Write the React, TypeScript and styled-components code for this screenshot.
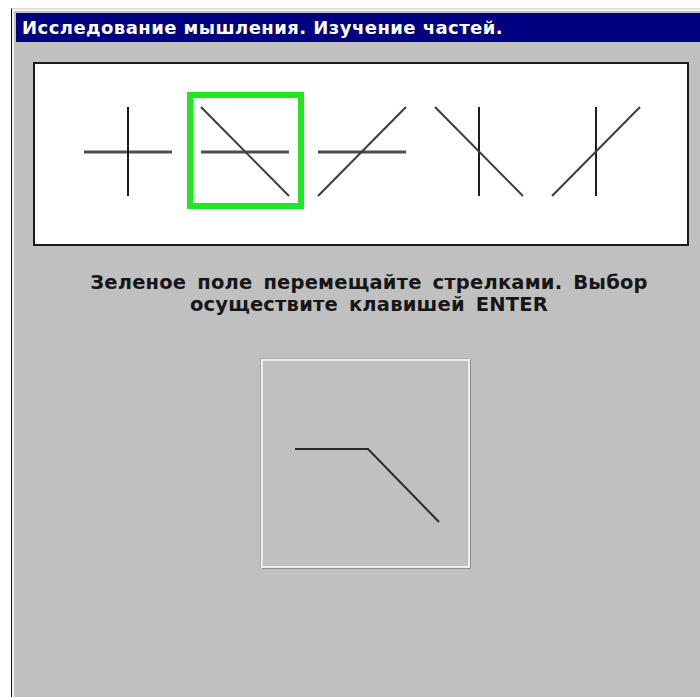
import styled, { createGlobalStyle } from 'styled-components';

const GlobalStyle = createGlobalStyle`
	html, body {
		margin: 0;
		padding: 0;
		background: #ffffff;
		overflow: hidden;
	}
	body {
		font-family: "DejaVu Sans", "Liberation Sans", sans-serif;
	}
`;

type Kind = 'h' | 'v' | 'down' | 'up';

// each variant combines two of the strokes
const variants: Kind[][] = [
	['h', 'v'],
	['h', 'down'],
	['h', 'up'],
	['v', 'down'],
	['v', 'up'],
];

const L = 14;
const R = 102;
const T = 15;
const B = 104;
const MX = 58;
const MY = 60;

function Stroke({ kind }: { kind: Kind }) {
	switch (kind) {
		case 'h':
			return <line x1={L} y1={MY} x2={R} y2={MY} stroke="#4d4d4d" strokeWidth={3} />;
		case 'v':
			return <line x1={MX} y1={T} x2={MX} y2={B} stroke="#1e1e1e" strokeWidth={2} />;
		case 'down':
			return <line x1={L} y1={T} x2={R} y2={B} stroke="#3c3c3c" strokeWidth={2} />;
		case 'up':
			return <line x1={L} y1={B} x2={R} y2={T} stroke="#3c3c3c" strokeWidth={2} />;
	}
}

export default function App() {
	const selected = 1;

	return (
		<>
			<GlobalStyle />
			<Window>
				<TitleBar>Исследование мышления. Изучение частей.</TitleBar>
				<Content>
					<ChoicePanel>
						{variants.map((strokes, i) => (
							<Cell key={i} $active={i === selected}>
								<svg width="117" height="117" viewBox="0 0 117 117">
									{strokes.map((k) => <Stroke key={k} kind={k} />)}
								</svg>
							</Cell>
						))}
					</ChoicePanel>
					<Hint>
						Зеленое поле перемещайте стрелками. Выбор<br />
						осуществите клавишей ENTER
					</Hint>
					<Sample>
						<svg width="205" height="205" viewBox="0 0 205 205">
							<polyline
								points="32,88 105,88 176,161"
								fill="none"
								stroke="#2a2a2a"
								strokeWidth={2}
							/>
						</svg>
					</Sample>
				</Content>
			</Window>
		</>
	);
}

const Window = styled.div`
	margin: 8px 0 0 11px;
	width: 700px;
	height: 700px;
	box-sizing: border-box;
	padding: 4px 0 0 4px;
	background: #c0c0c0;
	border-left: 1px solid #101010;
	border-top: 1px solid #d6d6d6;
	box-shadow: inset 2px 2px 0 #f2f2f2;
`;

const TitleBar = styled.div`
	height: 29px;
	background: #000080;
	color: #ffffff;
	font-weight: bold;
	font-size: 18px;
	letter-spacing: 0.45px;
	line-height: 29px;
	padding-left: 6px;
	white-space: nowrap;
`;

const Content = styled.div`
	display: flex;
	flex-direction: column;
	padding: 20px 0 0 17px;
`;

const ChoicePanel = styled.div`
	width: 656px;
	height: 184px;
	box-sizing: border-box;
	border: 2px solid #1c1c1c;
	background: #ffffff;
	display: flex;
	justify-content: center;
	align-items: flex-start;
	padding: 28px 0 0 3px;
`;

const Cell = styled.div<{ $active: boolean }>`
	width: 117px;
	height: 117px;
	position: relative;
	svg {
		display: block;
	}
	&::after {
		content: '';
		position: absolute;
		inset: 0;
		border: 6px solid ${({ $active }) => ($active ? '#1ee81e' : 'transparent')};
	}
`;

const Hint = styled.div`
	width: 672px;
	margin-top: 26px;
	text-align: center;
	color: #161616;
	font-weight: bold;
	font-size: 19.5px;
	letter-spacing: 0.2px;
	word-spacing: 4px;
	line-height: 22px;
`;

const Sample = styled.div`
	margin: 43px 0 0 228px;
	width: 209px;
	height: 209px;
	box-sizing: border-box;
	border: 2px solid #ededed;
	box-shadow: 1px 1px 0 #8e8e8e, -1px -1px 0 #a9a9a9;
	svg {
		display: block;
	}
`;
